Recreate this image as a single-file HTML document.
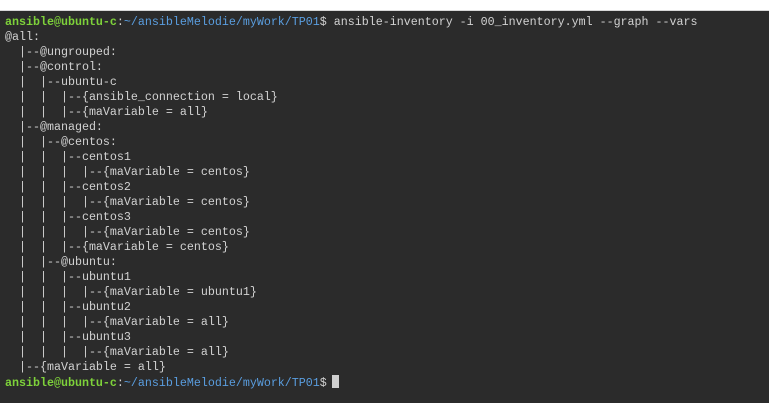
<!DOCTYPE html>
<html><head><meta charset="utf-8"><style>
html,body{margin:0;padding:0;background:#fff;width:769px;height:403px;overflow:hidden}
.t{position:absolute;left:0;top:10px;width:769px;height:393px;background:#2b2b2b;border-top:1px solid #d8d8d8;box-sizing:border-box}
pre{margin:0;position:absolute;left:5px;top:4px;font-family:"Liberation Mono",monospace;font-size:11.67px;line-height:15px;color:#d2d2d2}
.g{color:#7ed23a;font-weight:bold}.b{color:#5a9ee0}
.c{display:inline-block;width:7px;height:13px;background:#cfcfcf;vertical-align:-2px;margin-left:5px}
</style></head><body><div class="t"><pre><span class="g">ansible@ubuntu-c</span>:<span class="b">~/ansibleMelodie/myWork/TP01</span>$ ansible-inventory -i 00_inventory.yml --graph --vars
@all:
  |--@ungrouped:
  |--@control:
  |  |--ubuntu-c
  |  |  |--{ansible_connection = local}
  |  |  |--{maVariable = all}
  |--@managed:
  |  |--@centos:
  |  |  |--centos1
  |  |  |  |--{maVariable = centos}
  |  |  |--centos2
  |  |  |  |--{maVariable = centos}
  |  |  |--centos3
  |  |  |  |--{maVariable = centos}
  |  |  |--{maVariable = centos}
  |  |--@ubuntu:
  |  |  |--ubuntu1
  |  |  |  |--{maVariable = ubuntu1}
  |  |  |--ubuntu2
  |  |  |  |--{maVariable = all}
  |  |  |--ubuntu3
  |  |  |  |--{maVariable = all}
  |--{maVariable = all}
<span class="g">ansible@ubuntu-c</span>:<span class="b">~/ansibleMelodie/myWork/TP01</span>$<span class="c"></span></pre></div></body></html>
